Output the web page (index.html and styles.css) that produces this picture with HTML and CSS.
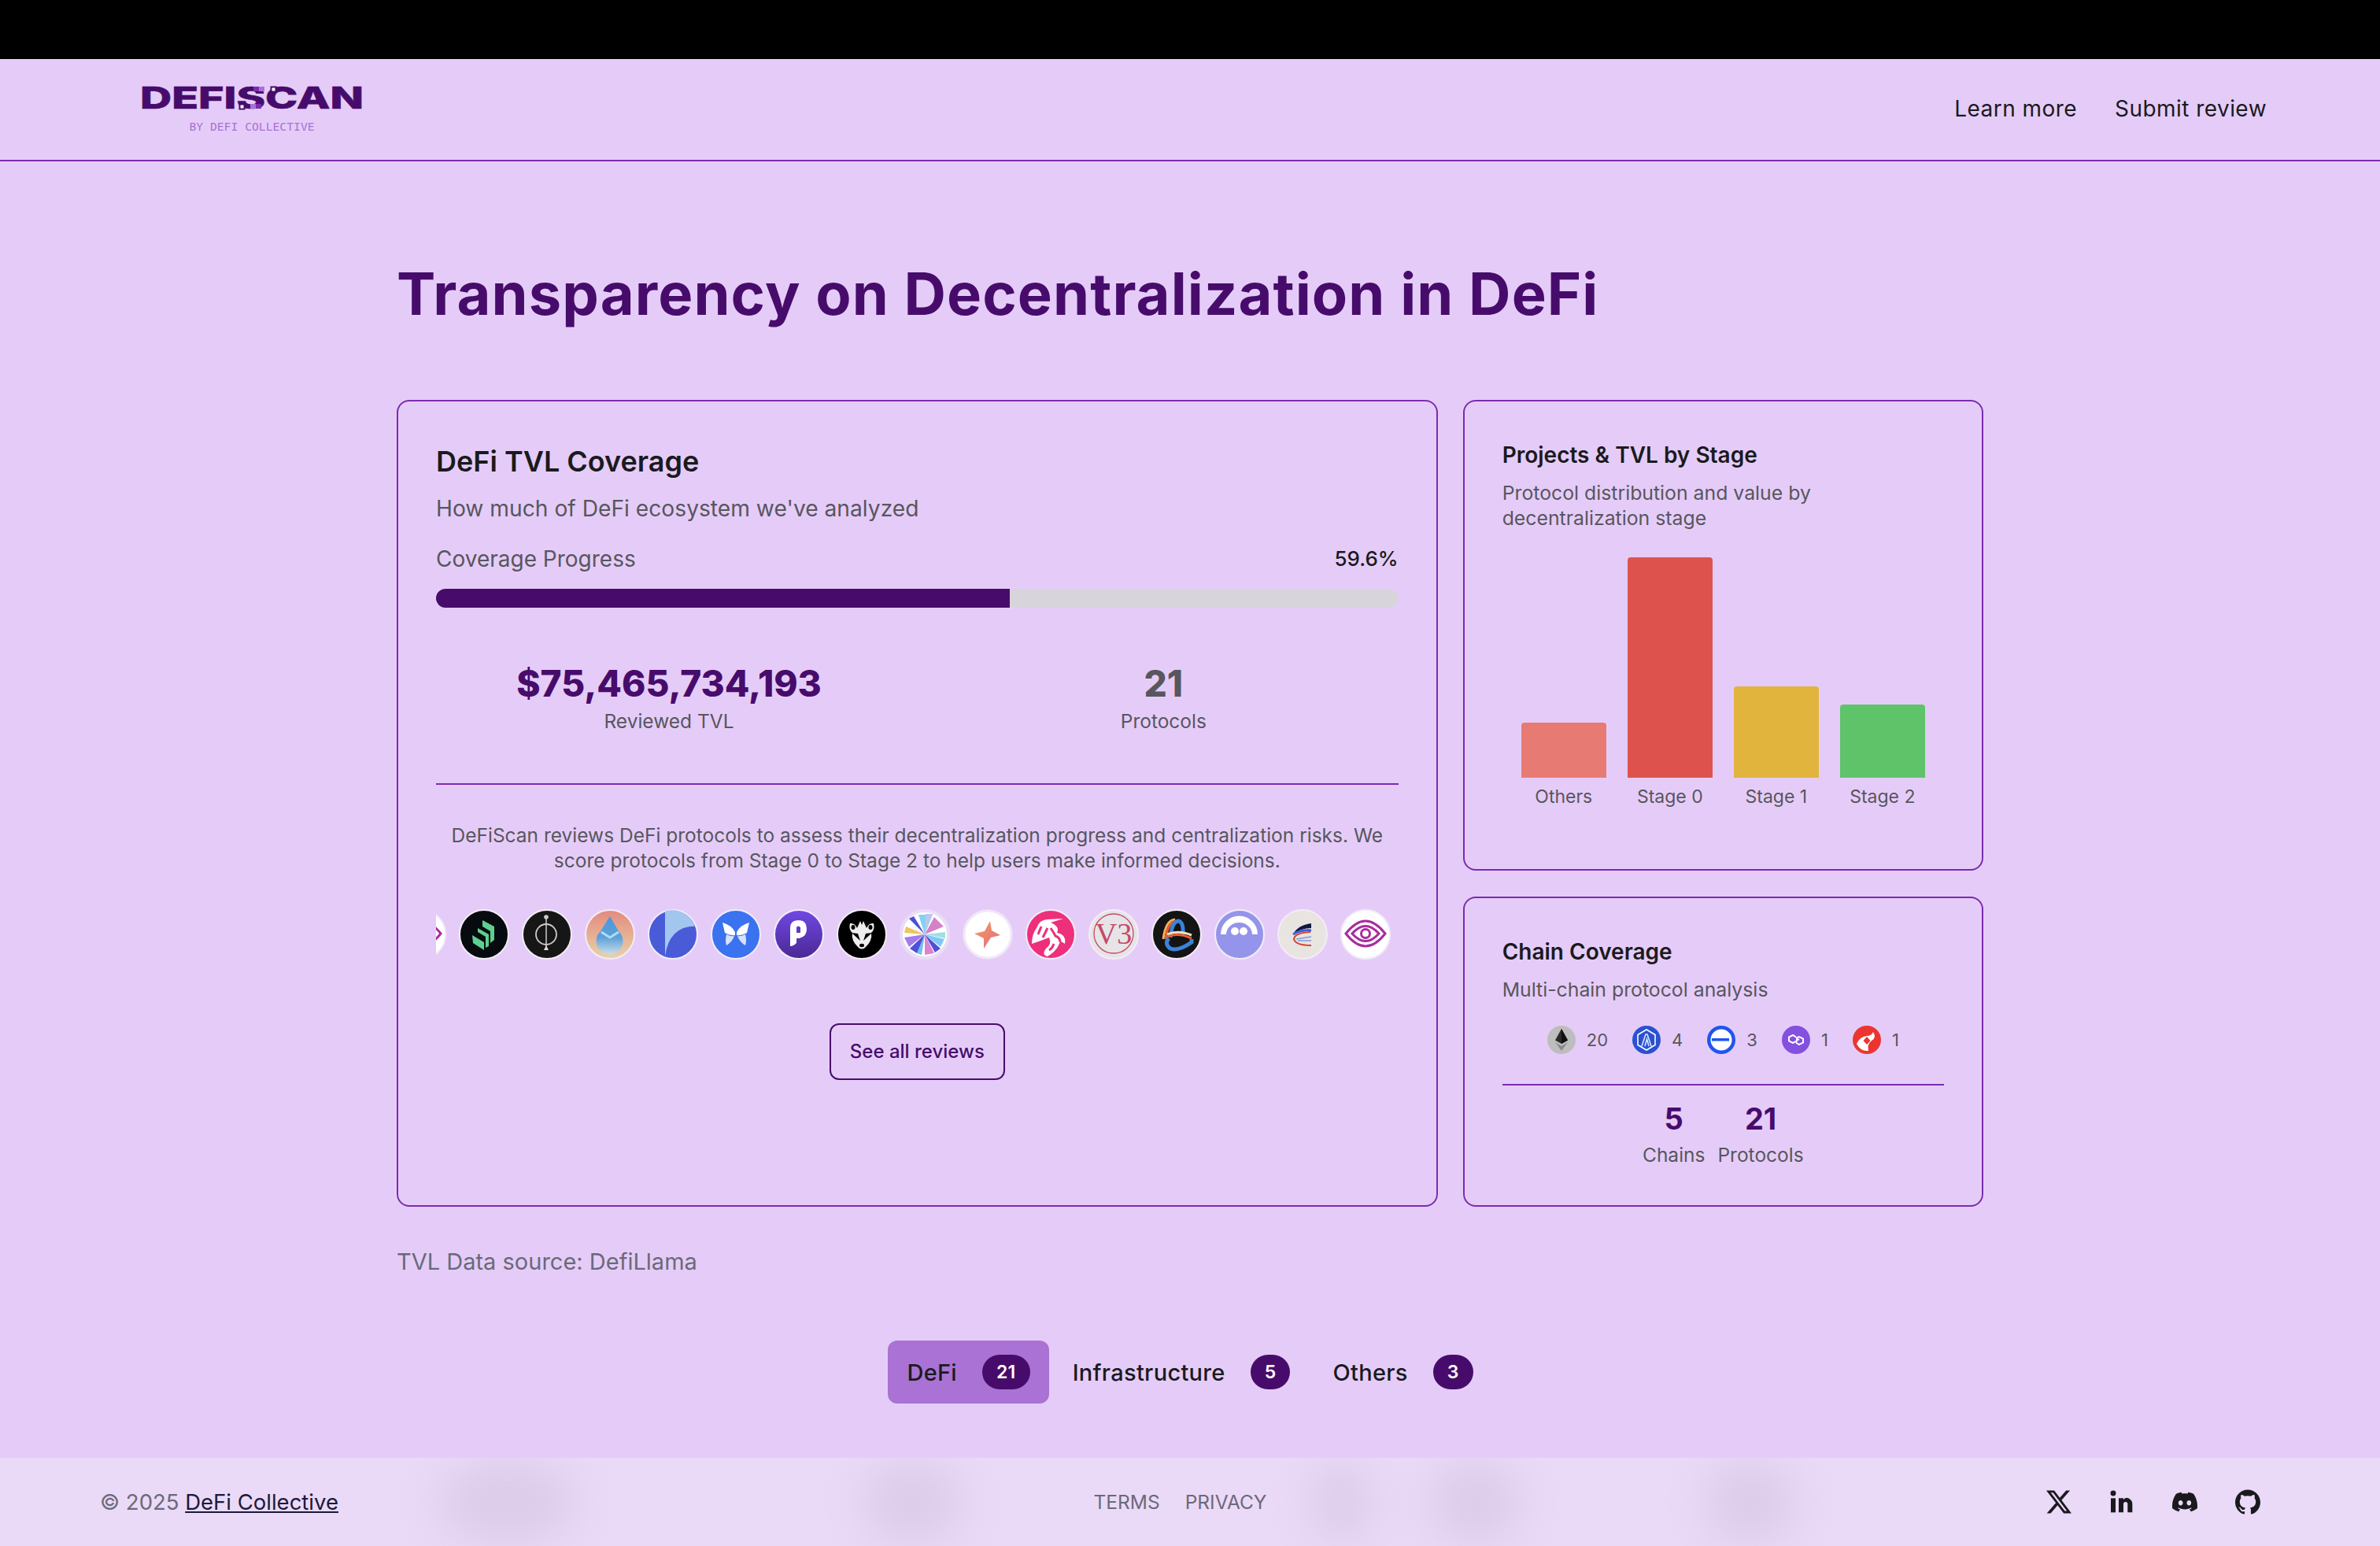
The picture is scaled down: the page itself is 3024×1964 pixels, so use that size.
FILE: index.html
```html
<!DOCTYPE html>
<html lang="en">
<head>
<meta charset="utf-8">
<title>DeFiScan</title>
<link rel="stylesheet" href="styles.css">
</head>
<body>
<div class="topbar"></div>
<header class="header">
  <a class="brand">
    <svg class="brand-mark" viewBox="-4 0 288 50" width="288" height="50">
      <text x="-2" y="40" textLength="284" lengthAdjust="spacingAndGlyphs" class="brand-text">DEFISCAN</text>
      <rect x="142" y="12" width="7" height="6" fill="#7b2bb0"/><rect x="149" y="12" width="7" height="6" fill="#a972d4"/>
      <rect x="164.500" y="12.500" width="6" height="6" fill="#fff" stroke="#470c6b" stroke-width="2"/>
      <rect x="124.500" y="34.500" width="6" height="6" fill="#fff" stroke="#470c6b" stroke-width="2"/>
      <rect x="138" y="34" width="7" height="6" fill="#a972d4"/><rect x="145" y="34" width="7" height="6" fill="#7b2bb0"/>
    </svg>
    <span class="brand-sub">BY DEFI COLLECTIVE</span>
  </a>
  <nav class="nav"><a>Learn more</a><a>Submit review</a></nav>
</header>
<main class="main">
  <h1 class="title">Transparency on Decentralization in DeFi</h1>
  <section class="grid">
    <article class="card card-main">
      <h2 class="h-large">DeFi TVL Coverage</h2>
      <p class="sub-large">How much of DeFi ecosystem we've analyzed</p>
      <div class="progress-head"><span>Coverage Progress</span><strong>59.6%</strong></div>
      <div class="progress"><div class="progress-fill" style="width:59.6%"></div></div>
      <div class="stats">
        <div class="stat"><div class="stat-value purple">$75,465,734,193</div><div class="stat-label">Reviewed TVL</div></div>
        <div class="stat stat-right"><div class="stat-value gray">21</div><div class="stat-label">Protocols</div></div>
      </div>
      <p class="blurb">DeFiScan reviews DeFi protocols to assess their decentralization progress and centralization risks. We score protocols from Stage 0 to Stage 2 to help users make informed decisions.</p>
      <div class="carousel"><div class="track">
        <svg class="logo" viewBox="0 0 64 64"><circle cx="32" cy="32" r="31" fill="#fff" stroke="#f3ecf8" stroke-width="2"/><path d="M7 31Q32 -1 57 31Q32 63 7 31Z" fill="none" stroke="#a92c9c" stroke-width="3"/><path d="M15 31Q32 12 49 31Q32 50 15 31Z" fill="none" stroke="#a92c9c" stroke-width="3"/><circle cx="32" cy="31" r="5.500" fill="none" stroke="#a92c9c" stroke-width="3"/></svg>
        <svg class="logo" viewBox="0 0 64 64"><circle cx="32" cy="32" r="31" fill="#070a0e" stroke="#f3ecf8" stroke-width="2"/><g fill="#5cd08f"><path d="M30 14L45 22V39L40 43V28L30 22Z"/><path d="M24 24L38 32V47L34 49V35L24 29Z"/><path d="M17 33L32 42V52L18 43Z"/></g></svg>
        <svg class="logo" viewBox="0 0 64 64"><circle cx="32" cy="32" r="31" fill="#161616" stroke="#f3ecf8" stroke-width="2"/><circle cx="31" cy="10" r="2.800" fill="#ccc"/><circle cx="31" cy="32" r="13" fill="none" stroke="#ccc" stroke-width="1.800"/><path d="M31 11V50" stroke="#ccc" stroke-width="1.500"/><path d="M28 52l3-6 3 6z" fill="#ddd"/></svg>
        <svg class="logo" viewBox="0 0 64 64"><defs><linearGradient id="g1" x1="0" y1="0" x2="0" y2="1"><stop offset="0" stop-color="#e28a7e"/><stop offset="1" stop-color="#ead2a8"/></linearGradient><linearGradient id="g2" x1="0" y1="0" x2="0" y2="1"><stop offset="0" stop-color="#4a98e0"/><stop offset=".55" stop-color="#5f9fd8"/><stop offset="1" stop-color="#c8dfe8"/></linearGradient></defs><circle cx="32" cy="32" r="31" fill="url(#g1)" stroke="#f3ecf8" stroke-width="2"/><path d="M32 9L43 28A17 17 0 1 1 20 28Z" fill="url(#g2)"/><path d="M21 29l11 7 11-7" fill="none" stroke="#a8e0f2" stroke-width="3"/></svg>
        <svg class="logo" viewBox="0 0 64 64"><circle cx="32" cy="32" r="31" fill="#4a5bd8" stroke="#f3ecf8" stroke-width="2"/><path d="M22 2.500A31 31 0 0 1 60 21.500Q27 22 22 60Z" fill="#a3c6ef"/></svg>
        <svg class="logo" viewBox="0 0 64 64"><circle cx="32" cy="32" r="31" fill="#3a72f0" stroke="#f3ecf8" stroke-width="2"/><path d="M15 17Q26 20 31 29V33Q26 34 18 30Z" fill="#fff"/><path d="M49 17Q38 20 33 29V33Q38 34 46 30Z" fill="#fff"/><path d="M20 32Q26 35 30 34Q27 42 20 46Q18 40 20 32Z" fill="#d6e2fb"/><path d="M44 32Q38 35 34 34Q37 42 44 46Q46 40 44 32Z" fill="#d6e2fb"/></svg>
        <svg class="logo" viewBox="0 0 64 64"><defs><linearGradient id="g3" x1="0" y1="0" x2="0" y2="1"><stop offset="0" stop-color="#7048e4"/><stop offset="1" stop-color="#4b2894"/></linearGradient></defs><circle cx="32" cy="32" r="31" fill="url(#g3)" stroke="#f3ecf8" stroke-width="2"/><path fill-rule="evenodd" d="M21 24Q21 14 31 14Q42 14 42 25Q42 37 29 37V43Q25 47 21 47ZM29 23V30H34V23Q31 20 29 23Z" fill="#fff"/></svg>
        <svg class="logo" viewBox="0 0 64 64"><circle cx="32" cy="32" r="31" fill="#000" stroke="#f3ecf8" stroke-width="2"/><path d="M17 18Q23 17 26 24L30 15L32 20L34 15L38 24Q41 17 47 18Q49 26 44 30Q46 40 36 49Q32 52 28 49Q18 40 20 30Q15 26 17 18Z" fill="#eee"/><path d="M19 30L30 40L27 31Z M45 30L34 40L37 31Z" fill="#000"/><ellipse cx="21" cy="23" rx="2.500" ry="3" fill="#000"/><ellipse cx="43" cy="23" rx="2.500" ry="3" fill="#000"/><ellipse cx="32" cy="46" rx="3" ry="2.200" fill="#000"/></svg>
        <svg class="logo" viewBox="0 0 64 64"><circle cx="32" cy="32" r="30" fill="#fff" stroke="#e9def5" stroke-width="4"/><path d="M32 32L24 7H42Z" fill="#7fd3f5"/><path d="M32 32L33 6H42Z" fill="#b8c8f0"/><path d="M32 32L44 10L56 22Z" fill="#d581c8"/><path d="M32 32L58 29V37Z" fill="#9fe0e8"/><path d="M32 32L57 38L52 48Z" fill="#7fc8f5"/><path d="M32 32L52 50L45 55Z" fill="#4f4fd8"/><path d="M32 32L44 56L32 58Z" fill="#dd82d0"/><path d="M32 32L28 58L22 56Z" fill="#6fc0f0"/><path d="M32 32L22 56L13 50Z" fill="#4f4fd8"/><path d="M32 32L12 48L6 36Z" fill="#a57cea"/><path d="M32 32L6 30L8 22Z" fill="#eec460"/><path d="M32 32L12 12L18 9Z" fill="#4e4ed8"/></svg>
        <svg class="logo" viewBox="0 0 64 64"><defs><linearGradient id="g4" x1="0" y1="0" x2="1" y2="1"><stop offset="0" stop-color="#f0a052"/><stop offset="1" stop-color="#e8668c"/></linearGradient></defs><circle cx="32" cy="32" r="30" fill="#fff" stroke="#f0e8f7" stroke-width="3"/><path d="M35 15L37 27L48 33L36 36L27 50L27 37L15 31L28 28Z" fill="url(#g4)"/></svg>
        <svg class="logo" viewBox="0 0 64 64"><circle cx="32" cy="32" r="31" fill="#ee2f7c" stroke="#f3ecf8" stroke-width="2"/><path d="M14 24Q18 13 28 13L48 12L32 17Q44 22 40 30Q52 32 50 44Q44 38 42 46Q38 54 28 60Q20 58 26 50Q34 44 30 36Q20 40 8 44Q8 32 14 24Z" fill="#fff"/><path d="M20 22L16 32M28 24L22 36M32 24Q36 30 38 34Q44 36 44 42M36 44Q34 50 30 52" fill="none" stroke="#ee2f7c" stroke-width="3"/></svg>
        <svg class="logo" viewBox="0 0 64 64"><circle cx="32" cy="32" r="31" fill="#e6e4e6" stroke="#f3ecf8" stroke-width="2"/><circle cx="32" cy="31" r="25" fill="none" stroke="#c44a68" stroke-width="1.300"/><text x="32" y="44" class="logo-v3">V3</text></svg>
        <svg class="logo" viewBox="0 0 64 64"><circle cx="32" cy="32" r="31" fill="#141414" stroke="#f3ecf8" stroke-width="2"/><path d="M15 38Q18 14 30 13" fill="none" stroke="#f2b060" stroke-width="3"/><path d="M18 38Q21 16 31 15" fill="none" stroke="#e9602c" stroke-width="3"/><path d="M24 36Q26 16 34 15Q41 16 40 32" fill="none" stroke="#3a84d8" stroke-width="5"/><path d="M20 32Q34 26 51 33" fill="none" stroke="#f0e0c0" stroke-width="3"/><path d="M20 35Q34 29 51 37" fill="none" stroke="#e9602c" stroke-width="3"/><path d="M51 38V42Q34 54 24 50Q16 44 22 37" fill="none" stroke="#3a84d8" stroke-width="5"/></svg>
        <svg class="logo" viewBox="0 0 64 64"><circle cx="32" cy="32" r="31" fill="#9494ea" stroke="#f3ecf8" stroke-width="2"/><path d="M8 32A23 23 0 0 1 55 32H48A16.500 15 0 0 0 15 32Z" fill="#fff"/><circle cx="26" cy="28" r="5" fill="#fff"/><circle cx="37" cy="28" r="5" fill="#fff"/></svg>
        <svg class="logo" viewBox="0 0 64 64"><circle cx="32" cy="32" r="31" fill="#e8e4e0" stroke="#f3ecf8" stroke-width="2"/><path d="M43 18Q26 20 20 32Q30 24 43 24Z" fill="#101840"/><path d="M20 32Q30 26 43 27" fill="none" stroke="#3f5fd8" stroke-width="3"/><path d="M42 29Q22 30 21 38Q23 46 43 46" fill="none" stroke="#d8402a" stroke-width="2"/><path d="M24 38L43 35M26 40L43 40" stroke="#7f9ae0" stroke-width="1.500"/></svg>
        <svg class="logo" viewBox="0 0 64 64"><circle cx="32" cy="32" r="31" fill="#fff" stroke="#f3ecf8" stroke-width="2"/><path d="M7 31Q32 -1 57 31Q32 63 7 31Z" fill="none" stroke="#a92c9c" stroke-width="3"/><path d="M15 31Q32 12 49 31Q32 50 15 31Z" fill="none" stroke="#a92c9c" stroke-width="3"/><circle cx="32" cy="31" r="5.500" fill="none" stroke="#a92c9c" stroke-width="3"/></svg>
      </div></div>
      <div class="cta-row"><a class="cta">See all reviews</a></div>
    </article>
    <div class="side">
      <article class="card card-stage">
        <h3 class="h-small">Projects &amp; TVL by Stage</h3>
        <p class="sub-small">Protocol distribution and value by<br>decentralization stage</p>
        <div class="chart">
          <div class="bar-col"><div class="bar bar-others" style="height:70px"></div><span>Others</span></div>
          <div class="bar-col"><div class="bar bar-s0" style="height:280px"></div><span>Stage 0</span></div>
          <div class="bar-col"><div class="bar bar-s1" style="height:116px"></div><span>Stage 1</span></div>
          <div class="bar-col"><div class="bar bar-s2" style="height:93px"></div><span>Stage 2</span></div>
        </div>
      </article>
      <article class="card card-chain">
        <h3 class="h-small">Chain Coverage</h3>
        <p class="sub-small">Multi-chain protocol analysis</p>
        <div class="chains">
          <div class="chain"><svg viewBox="0 0 36 36" class="chain-icon"><circle cx="18" cy="18" r="18" fill="#bdbdbd"/><path d="M18 4L10 18.500L18 23L26 18.500Z" fill="#2a2a2a"/><path d="M18 4L26 18.500L18 23Z" fill="#111"/><path d="M10 21L18 32L26 21L18 26Z" fill="#8a8a8a"/></svg><span>20</span></div>
          <div class="chain"><svg viewBox="0 0 36 36" class="chain-icon"><circle cx="18" cy="18" r="18" fill="#2a52d0"/><path d="M18 5L29 11.500V24.500L18 31L7 24.500V11.500Z" fill="none" stroke="#fff" stroke-width="1.600"/><path d="M12 26L17 11H19L24 26M16 26L18.500 17L21 26" fill="none" stroke="#dbe4ff" stroke-width="1.600"/></svg><span>4</span></div>
          <div class="chain"><svg viewBox="0 0 36 36" class="chain-icon"><circle cx="18" cy="18" r="18" fill="#1f55f0"/><circle cx="18" cy="18" r="13.500" fill="#fff"/><rect x="6" y="16" width="22" height="3.500" fill="#1f55f0"/></svg><span>3</span></div>
          <div class="chain"><svg viewBox="0 0 36 36" class="chain-icon"><circle cx="18" cy="18" r="18" fill="#8350e0"/><path d="M18 14.500L14 12L9 14.500V19.500L14 22L19 19.500V16.500L22 18M18 21.500L22 24L27 21.500V16.500L22 14L18 16" fill="none" stroke="#fff" stroke-width="2"/></svg><span>1</span></div>
          <div class="chain"><svg viewBox="0 0 36 36" class="chain-icon"><circle cx="18" cy="18" r="18" fill="#ec3530"/><path d="M26 8Q24 13 18 13Q9 14 5 23Q10 33 20 32Q18 24 24 19Q31 15 26 8Z" fill="#fff"/><path d="M18 14L22.500 19L18 24L13.500 19Z" fill="#ec3530"/></svg><span>1</span></div>
        </div>
        <div class="chain-stats">
          <div class="cstat"><div class="cstat-value">5</div><div class="cstat-label">Chains</div></div>
          <div class="cstat"><div class="cstat-value">21</div><div class="cstat-label">Protocols</div></div>
        </div>
      </article>
    </div>
  </section>
  <p class="source">TVL Data source: DefiLlama</p>
  <div class="tabs">
    <button class="tab tab-active">DeFi <span class="count">21</span></button>
    <button class="tab">Infrastructure <span class="count">5</span></button>
    <button class="tab">Others <span class="count">3</span></button>
  </div>
</main>
<footer class="footer">
  <span class="blob blob-a"></span><span class="blob blob-b"></span><span class="blob blob-c"></span><span class="blob blob-d"></span><span class="blob blob-e"></span>
  <div class="copy">© 2025 <a>DeFi Collective</a></div>
  <div class="legal"><a>TERMS</a><a>PRIVACY</a></div>
  <div class="social">
    <svg viewBox="0 0 24 24"><path d="M18.901 1.153h3.68l-8.04 9.19L24 22.846h-7.406l-5.8-7.584-6.638 7.584H.474l8.6-9.83L0 1.154h7.594l5.243 6.932ZM17.61 20.644h2.039L6.486 3.24H4.298Z"/></svg>
    <svg viewBox="0 0 24 24"><path d="M16 8a6 6 0 0 1 6 6v8h-4.500v-8a2 2 0 0 0-4 0v8H9V8.500h4.500v1.500A6 6 0 0 1 16 8z"/><rect x="1.500" y="8.500" width="4.500" height="13.500"/><circle cx="3.750" cy="3.750" r="2.600"/></svg>
    <svg viewBox="0 0 24 24"><path d="M20.317 4.3698a19.7913 19.7913 0 00-4.8851-1.5152.0741.0741 0 00-.0785.0371c-.211.3753-.4447.8648-.6083 1.2495-1.8447-.2762-3.68-.2762-5.4868 0-.1636-.3933-.4058-.8742-.6177-1.2495a.077.077 0 00-.0785-.037 19.7363 19.7363 0 00-4.8852 1.515.0699.0699 0 00-.0321.0277C.5334 9.0458-.319 13.5799.0992 18.0578a.0824.0824 0 00.0312.0561c2.0528 1.5076 4.0413 2.4228 5.9929 3.0294a.0777.0777 0 00.0842-.0276c.4616-.6304.8731-1.2952 1.226-1.9942a.076.076 0 00-.0416-.1057c-.6528-.2476-1.2743-.5495-1.8722-.8923a.077.077 0 01-.0076-.1277c.1258-.0943.2517-.1923.3718-.2914a.0743.0743 0 01.0776-.0105c3.9278 1.7933 8.18 1.7933 12.0614 0a.0739.0739 0 01.0785.0095c.1202.099.246.1981.3728.2924a.077.077 0 01-.0066.1276 12.2986 12.2986 0 01-1.873.8914.0766.0766 0 00-.0407.1067c.3604.698.7719 1.3628 1.225 1.9932a.076.076 0 00.0842.0286c1.961-.6067 3.9495-1.5219 6.0023-3.0294a.077.077 0 00.0313-.0552c.5004-5.177-.8382-9.6739-3.5485-13.6604a.061.061 0 00-.0312-.0286zM8.02 15.3312c-1.1825 0-2.1569-1.0857-2.1569-2.419 0-1.3332.9555-2.4189 2.157-2.4189 1.2108 0 2.1757 1.0952 2.1568 2.419 0 1.3332-.9555 2.4189-2.1569 2.4189zm7.9748 0c-1.1825 0-2.1569-1.0857-2.1569-2.419 0-1.3332.9554-2.4189 2.1569-2.4189 1.2108 0 2.1757 1.0952 2.1568 2.419 0 1.3332-.946 2.4189-2.1568 2.4189Z"/></svg>
    <svg viewBox="0 0 24 24"><path d="M12 .297c-6.63 0-12 5.373-12 12 0 5.303 3.438 9.8 8.205 11.385.6.113.82-.258.82-.577 0-.285-.01-1.04-.015-2.04-3.338.724-4.042-1.61-4.042-1.61C4.422 18.07 3.633 17.7 3.633 17.7c-1.087-.744.084-.729.084-.729 1.205.084 1.838 1.236 1.838 1.236 1.07 1.835 2.809 1.305 3.495.998.108-.776.417-1.305.76-1.605-2.665-.3-5.466-1.332-5.466-5.93 0-1.31.465-2.38 1.235-3.22-.135-.303-.54-1.523.105-3.176 0 0 1.005-.322 3.3 1.23.96-.267 1.98-.399 3-.405 1.02.006 2.04.138 3 .405 2.28-1.552 3.285-1.23 3.285-1.23.645 1.653.24 2.873.12 3.176.765.84 1.23 1.91 1.23 3.22 0 4.61-2.805 5.625-5.475 5.92.42.36.81 1.096.81 2.22 0 1.606-.015 2.896-.03 3.286 0 .315.21.69.825.57C20.565 22.092 24 17.592 24 12.297c0-6.627-5.373-12-12-12"/></svg>
  </div>
</footer>
</body>
</html>
```
FILE: styles.css
```css
* { box-sizing: border-box; }
html, body { margin: 0; }
body {
  width: 3024px;
  height: 1964px;
  overflow: hidden;
  display: flex;
  flex-direction: column;
  background: #e5ccf8;
  color: #1a1a1e;
  font-family: Inter, "Noto Sans", sans-serif;
}
a { color: inherit; }
h1, h2, h3, p { margin: 0; }

.topbar { height: 75px; background: #000; flex: none; }

.header {
  flex: none;
  height: 130px;
  padding: 23px 144px 0 176px;
  border-bottom: 2px solid #7b2bb0;
  display: flex;
  justify-content: space-between;
  align-items: flex-start;
}
.brand { display: flex; flex-direction: column; align-items: center; gap: 4px; }
.brand-mark { display: block; }
.brand-text { font-family: Inter, sans-serif; font-weight: 800; font-size: 38.500px; fill: #470c6b; stroke: #470c6b; stroke-width: .6px; }
.brand-sub { font-family: "DejaVu Sans Mono", monospace; font-size: 14.700px; line-height: 18px; color: #a972d4; }
.nav { display: flex; gap: 48px; font-size: 28px; line-height: 40px; padding-top: 20px; letter-spacing: .45px; }

.main { flex: 1; width: 2016px; margin: 0 auto; padding-top: 124px; min-height: 0; }
.title { font-size: 74px; line-height: 88px; font-weight: 700; color: #470c6b; letter-spacing: 1.100px; }

.grid { display: grid; grid-template-columns: minmax(0, 2fr) minmax(0, 1fr); gap: 32px; margin-top: 91px; height: 1025px; }
.card { border: 2px solid #7b2bb0; border-radius: 16px; min-width: 0; }
.card-main { padding: 52px 48px 48px; }
.side { display: flex; flex-direction: column; gap: 33px; min-height: 0; }
.card-stage { flex: none; height: 598px; padding: 50px 48px; }
.card-chain { flex: 1; padding: 50px 48px 0; }

.h-large { font-size: 36px; line-height: 48px; font-weight: 600; }
.sub-large { font-size: 28.200px; line-height: 40px; color: #58565e; margin-top: 16px; }
.progress-head { display: flex; justify-content: space-between; align-items: center; font-size: 28px; line-height: 40px; color: #58565e; margin-top: 24px; }
.progress-head strong { font-weight: 500; color: #1a1a1e; font-size: 26px; }
.progress { height: 24px; border-radius: 12px; background: #d8d4dc; margin-top: 18px; overflow: hidden; }
.progress-fill { height: 100%; background: #470c6b; }

.stats { display: grid; grid-template-columns: 592px 1fr; margin-top: 68px; padding-bottom: 63px; border-bottom: 2px solid #7b2bb0; }
.stat { text-align: center; }
.stat-right { padding-left: 34px; }
.stat-value { font-size: 46px; line-height: 56px; font-weight: 800; }
.purple { color: #470c6b; }
.gray { color: #58565e; }
.stat-label { font-size: 24.500px; line-height: 32px; color: #58565e; margin-top: 4px; }

.blurb { font-size: 24.500px; line-height: 32px; color: #58565e; text-align: center; margin-top: 48px; padding: 0 10px; }
.carousel { overflow: hidden; margin-top: 46px; height: 64px; }
.track { display: flex; gap: 16px; margin-left: -51px; }
.logo { width: 64px; height: 64px; flex: none; display: block; }
.logo-v3 { font-family: "Liberation Serif", serif; font-size: 38px; fill: #c44a68; text-anchor: middle; }
.cta-row { display: flex; justify-content: center; margin-top: 81px; }
.cta { display: block; border: 2px solid #470c6b; border-radius: 12px; padding: 0 24px; height: 72px; line-height: 68px; font-size: 24px; font-weight: 500; color: #470c6b; }

.h-small { font-size: 28px; line-height: 36px; font-weight: 600; }
.sub-small { font-size: 24.800px; line-height: 32px; color: #58565e; margin-top: 14px; }
.chart { display: flex; justify-content: center; gap: 27px; margin-top: 34px; }
.bar-col { width: 108px; height: 318px; display: flex; flex-direction: column; justify-content: flex-end; align-items: center; white-space: nowrap; }
.bar-col span { font-size: 23px; line-height: 28px; margin-top: 10px; color: #58565e; flex: none; }
.bar { width: 108px; border-radius: 4px 4px 0 0; flex: none; }
.bar-others { background: #e87a74; }
.bar-s0 { background: #de524e; }
.bar-s1 { background: #e1b43e; }
.bar-s2 { background: #5fc36a; }

.chains { display: flex; justify-content: center; gap: 31px; margin-top: 30px; padding-bottom: 38px; border-bottom: 2px solid #7b2bb0; }
.chain { display: flex; align-items: center; gap: 14px; font-size: 22px; color: #58565e; }
.chain-icon { width: 36px; height: 36px; display: block; }
.chain-stats { display: flex; justify-content: center; gap: 16px; margin-top: 20px; }
.cstat { text-align: center; }
.cstat-value { font-size: 38px; line-height: 44px; font-weight: 700; color: #470c6b; }
.cstat-label { font-size: 24.500px; line-height: 32px; color: #58565e; margin-top: 8px; }

.source { font-size: 29px; line-height: 40px; color: #6a6a78; margin-top: 50px; }
.tabs { display: flex; justify-content: center; gap: 6px; margin-top: 80px; }
.tab { display: flex; align-items: center; gap: 32px; height: 80px; padding: 0 24px; border: 0; border-radius: 12px; background: none; font: 500 29px Inter, sans-serif; color: #1a1a1e; letter-spacing: .3px; }
.tab-active { background: #a972d4; }
.count { min-width: 50px; height: 44px; padding: 0 18px; border-radius: 22px; background: #470c6b; color: #fff; font-size: 23px; font-weight: 600; line-height: 44px; text-align: center; }

.footer {
  flex: none;
  position: relative;
  height: 112px;
  overflow: hidden;
  padding: 0 152px 0 127px;
  display: grid;
  grid-template-columns: 1fr auto 1fr;
  align-items: center;
  background: #ebd9f8;
}
.blob { position: absolute; top: 0; height: 112px; border-radius: 50%; background: #c9bcd8; opacity: .45; filter: blur(28px); }
.blob-a { left: 554px; width: 180px; }
.blob-b { left: 1094px; width: 130px; }
.blob-c { left: 1664px; width: 80px; }
.blob-d { left: 1814px; width: 120px; }
.blob-e { left: 2164px; width: 120px; }
.copy { position: relative; font-size: 27.500px; color: #6a6a78; }
.copy a { color: #1a1a3a; text-decoration: underline; }
.legal { position: relative; display: flex; gap: 32px; font-size: 24.500px; color: #6a6a78; }
.social { position: relative; display: flex; justify-content: flex-end; gap: 48px; }
.social svg { width: 32px; height: 32px; fill: #1a1a1e; display: block; }
```
